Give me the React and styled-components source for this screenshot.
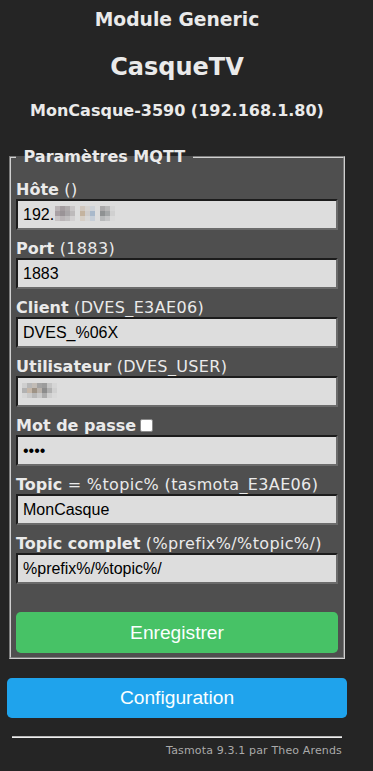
import React from "react";
import styled, { createGlobalStyle } from "styled-components";

const GlobalStyle = createGlobalStyle`
  body {
    margin: 0;
    background: #252525;
    color: #eaeaea;
    font-family: "DejaVu Sans", Verdana, sans-serif;
  }
`;

const Page = styled.div`
  width: 340px;
  margin-left: 7px;
  padding-top: 9px;
  text-align: center;
`;

const Title = styled.div`
  font-weight: bold;
  font-size: ${(p) => p.size}px;
  line-height: ${(p) => p.lh}px;
  margin-top: ${(p) => p.mt || 0}px;
`;

const Fieldset = styled.fieldset`
  margin: 27px 2px 0;
  padding: 15px 5px 4px;
  background: #4f4f4f;
  border: 2px groove #d0d0d0;
  text-align: left;
  min-width: 0;
`;

const Legend = styled.legend`
  padding: 0 2px;
  font-weight: bold;
  font-size: 16px;
  line-height: 18px;
`;

const Form = styled.div`
  display: flex;
  flex-direction: column;
  gap: 10px;
`;

const Field = styled.div`
  display: flex;
  flex-direction: column;
`;

const Label = styled.div`
  font-size: 16px;
  line-height: 18px;
  white-space: nowrap;

  b {
    font-weight: bold;
  }
`;

const Hint = styled.span`
  letter-spacing: 0.35px;
`;

const InputWrap = styled.div`
  position: relative;
`;

const Input = styled.input`
  display: block;
  width: 100%;
  height: 31px;
  box-sizing: border-box;
  padding: 0 5px;
  margin: 0;
  background: #dddddd;
  color: #000;
  font-family: "Liberation Sans", Arial, sans-serif;
  font-size: 16px;
  border-style: solid;
  border-width: 2px;
  border-color: #1c1c1c #6b6b6b #6b6b6b #1c1c1c;
  outline: none;
`;

const Check = styled.input`
  appearance: none;
  width: 13px;
  height: 13px;
  margin: 0 0 0 4px;
  vertical-align: -1px;
  background: #ffffff;
  border: 1px solid #8a8a8a;
  border-radius: 2px;
`;

const MosaicSvg = styled.svg`
  position: absolute;
  left: ${(p) => p.x}px;
  top: ${(p) => p.y}px;
`;

const Button = styled.button`
  display: block;
  width: 100%;
  height: ${(p) => p.h}px;
  border: 0;
  border-radius: 0.3rem;
  background: ${(p) => (p.green ? "#47c266" : "#1fa3ec")};
  color: #faffff;
  font-family: "Liberation Sans", Arial, sans-serif;
  font-size: 19.2px;
  margin-top: ${(p) => p.mt}px;
  cursor: pointer;
`;

const Footer = styled.div`
  margin-top: 18px;
  text-align: right;
  font-size: 11px;
`;

const Rule = styled.hr`
  margin: 0 5px;
  border: 0;
  border-top: 1px solid #b8b8b8;
  border-bottom: 1px solid #eeeeee;
`;

const Credit = styled.a`
  display: block;
  margin: 6px 5px 0 0;
  color: #aaa;
  text-decoration: none;
  line-height: 13px;
  letter-spacing: 0.15px;
`;

const hostCells = [
  ["#b9b3b5", "#a39c9f", "#aeaaab", "#c9c6c7", null, "#d1c7bd", "#d6d3d0", "#cdd2d8", null, "#aaa9aa", "#b8b8b8", "#d6d6d6"],
  ["#a8a0a3", "#9a9497", "#a9a6a8", "#bdbabb", null, "#c4b39f", "#cfcccb", "#a9b9cb", null, "#8f9293", "#a4a7a8", "#d0d0d0"],
  ["#c7c3c4", "#bab5b7", "#c0bebf", "#d2d0d1", null, "#d6cec5", "#d8d7d6", "#c6ced8", null, "#b7b9ba", "#c4c5c6", "#dadada"],
];

const userCells = [
  ["#cfcfcf", "#b7b7b7", "#c2bcb6", "#a3a3a3", "#9c9c9c", "#c5c5c5", "#d6d6d6"],
  ["#b2b2b2", "#c5b7a9", "#9e9386", "#b9b2ab", "#8c8c8c", "#b0b0b0", "#d0d0d0"],
  ["#d6d6d6", "#cacaca", "#b8b8b8", "#c9c9c9", "#acacac", "#cfcfcf", "#d9d9d9"],
];

const Mosaic = ({ cells, x, y, size = 5 }) => (
  <MosaicSvg x={x} y={y} width={cells[0].length * size} height={cells.length * size}>
    {cells.map((row, r) =>
      row.map((c, i) =>
        c ? <rect key={r + "-" + i} x={i * size} y={r * size} width={size} height={size} fill={c} /> : null
      )
    )}
  </MosaicSvg>
);

const fields = [
  { name: "Hôte", hint: " ()", value: "192.", mosaic: { cells: hostCells, x: 39, y: 7 } },
  { name: "Port", hint: " (1883)", value: "1883" },
  { name: "Client", hint: " (DVES_E3AE06)", value: "DVES_%06X" },
  { name: "Utilisateur", hint: " (DVES_USER)", value: "", mosaic: { cells: userCells, x: 6, y: 7 } },
  { name: "Mot de passe", check: true, value: "****", type: "password" },
  { name: "Topic", hint: " = %topic% (tasmota_E3AE06)", value: "MonCasque" },
  { name: "Topic complet", hint: " (%prefix%/%topic%/)", value: "%prefix%/%topic%/" },
];

export default function App() {
  return (
    <>
      <GlobalStyle />
      <Page>
        <Title size={18.72} lh={22}>Module Generic</Title>
        <Title size={24} lh={28} mt={22}>CasqueTV</Title>
        <Title size={16} lh={20} mt={20}>MonCasque-3590 (192.168.1.80)</Title>

        <Fieldset>
          <Legend>&nbsp;Paramètres MQTT&nbsp;</Legend>
          <Form>
            {fields.map((f) => (
              <Field key={f.name}>
                <Label>
                  <b>{f.name}</b>
                  {f.hint && <Hint>{f.hint}</Hint>}
                  {f.check && <Check type="checkbox" readOnly />}
                </Label>
                <InputWrap>
                  <Input type={f.type || "text"} defaultValue={f.value} />
                  {f.mosaic && <Mosaic {...f.mosaic} />}
                </InputWrap>
              </Field>
            ))}
          </Form>
          <Button green h={41} mt={28}>Enregistrer</Button>
        </Fieldset>

        <Button h={40} mt={19}>Configuration</Button>

        <Footer>
          <Rule />
          <Credit href="#">Tasmota 9.3.1 par Theo Arends</Credit>
        </Footer>
      </Page>
    </>
  );
}
